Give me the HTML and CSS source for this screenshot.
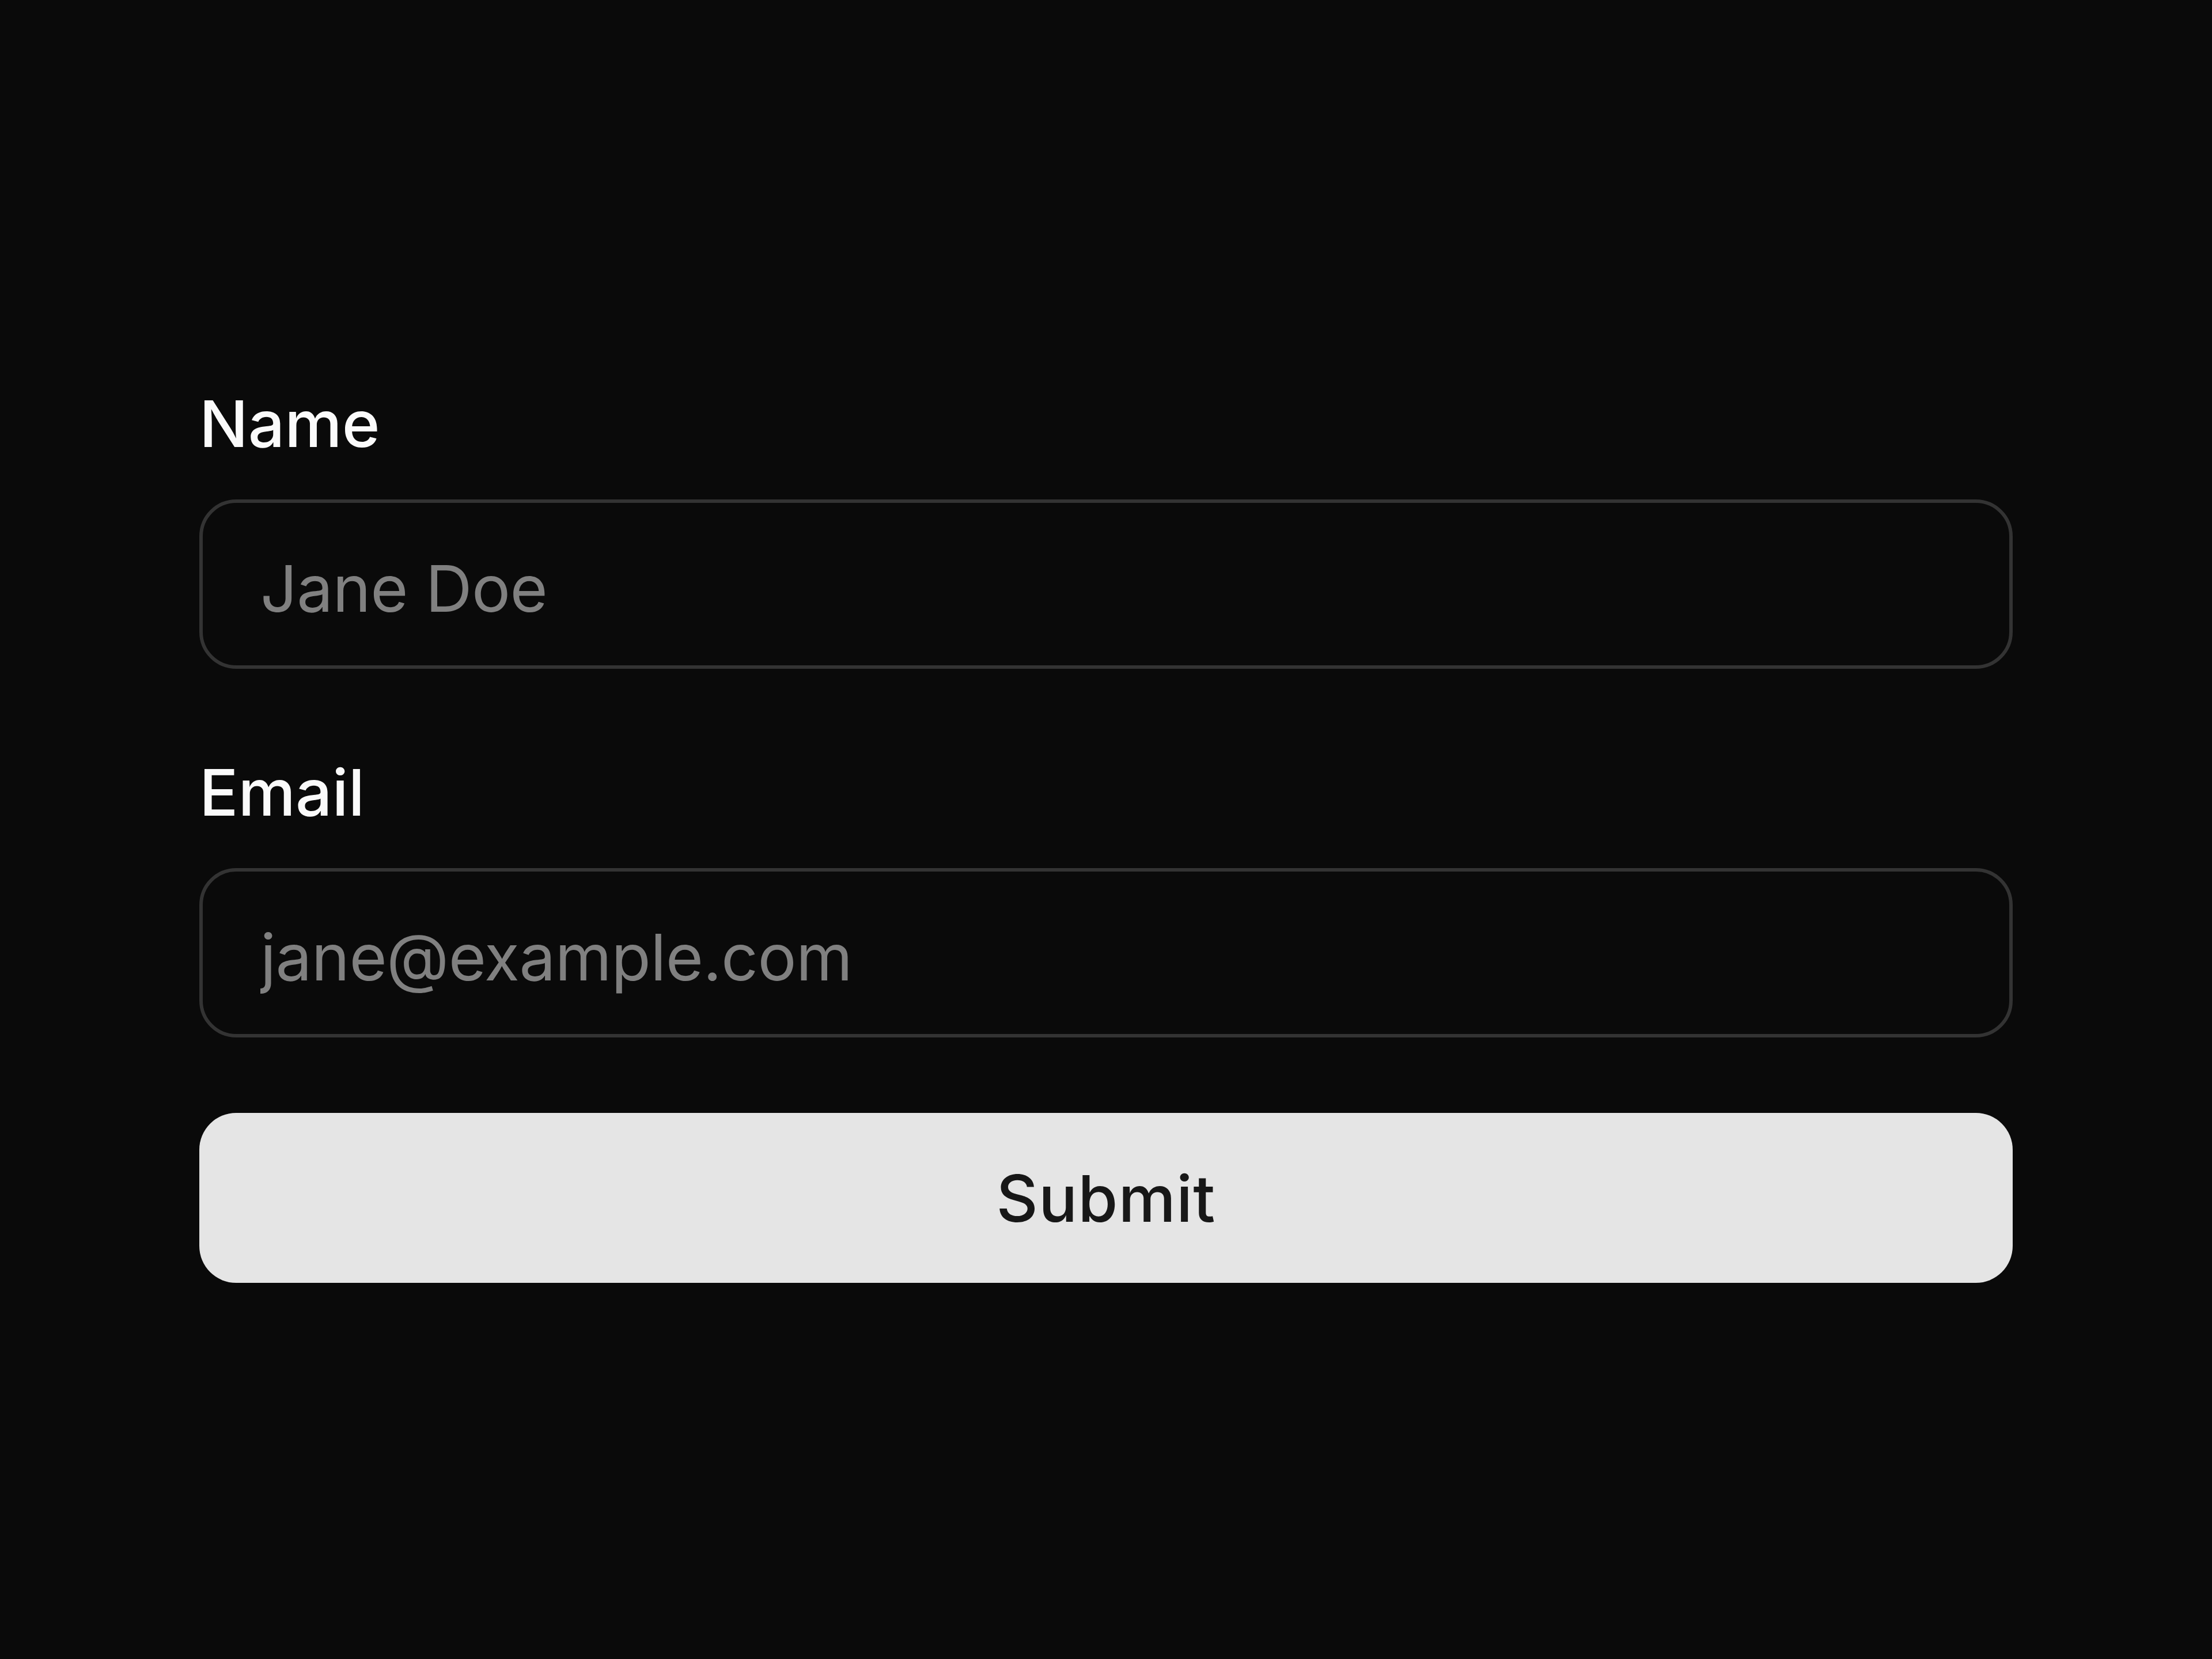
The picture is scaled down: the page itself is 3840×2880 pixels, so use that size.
FILE: index.html
```html
<!DOCTYPE html>
<html lang="en">
<head>
<meta charset="utf-8">
<title>Form</title>
<link rel="stylesheet" href="styles.css">
</head>
<body>
<main class="page">
  <form class="form" onsubmit="return false">
    <div class="field">
      <label class="label" for="name">Name</label>
      <input class="input" id="name" type="text" placeholder="Jane Doe">
    </div>
    <div class="field">
      <label class="label" for="email">Email</label>
      <input class="input" id="email" type="email" placeholder="jane@example.com">
    </div>
    <button class="submit" type="submit">Submit</button>
  </form>
</main>
</body>
</html>
```
FILE: styles.css
```css
* { box-sizing: border-box; }
html, body {
  margin: 0;
  padding: 0;
  background: #0a0a0a;
}
body {
  font-family: Inter, "Noto Sans", sans-serif;
  color: #fafafa;
}
.page {
  min-height: 2880px;
  padding: 667px 346px 0;
}
.form {
  display: flex;
  flex-direction: column;
}
.field {
  display: flex;
  flex-direction: column;
  margin-bottom: 146px;
}
.field:last-of-type {
  margin-bottom: 131px;
}
.label {
  font-size: 112px;
  line-height: 136px;
  font-weight: 500;
  color: #fafafa;
  margin-bottom: 64px;
}
.input {
  height: 294px;
  width: 100%;
  border: 6px solid #333333;
  border-radius: 64px;
  background: #0a0a0a;
  padding: 14px 100px 0;
  font-family: Inter, "Noto Sans", sans-serif;
  font-size: 112px;
  line-height: 136px;
  letter-spacing: -0.6px;
  color: #fafafa;
  outline: none;
}
.input::placeholder {
  color: #808080;
  opacity: 1;
}
.submit {
  height: 295px;
  width: 100%;
  border: none;
  border-radius: 64px;
  background: #e5e5e5;
  color: #171717;
  font-family: Inter, "Noto Sans", sans-serif;
  font-size: 112px;
  font-weight: 500;
  line-height: 136px;
  letter-spacing: 1px;
  padding: 0;
  cursor: pointer;
}
```
